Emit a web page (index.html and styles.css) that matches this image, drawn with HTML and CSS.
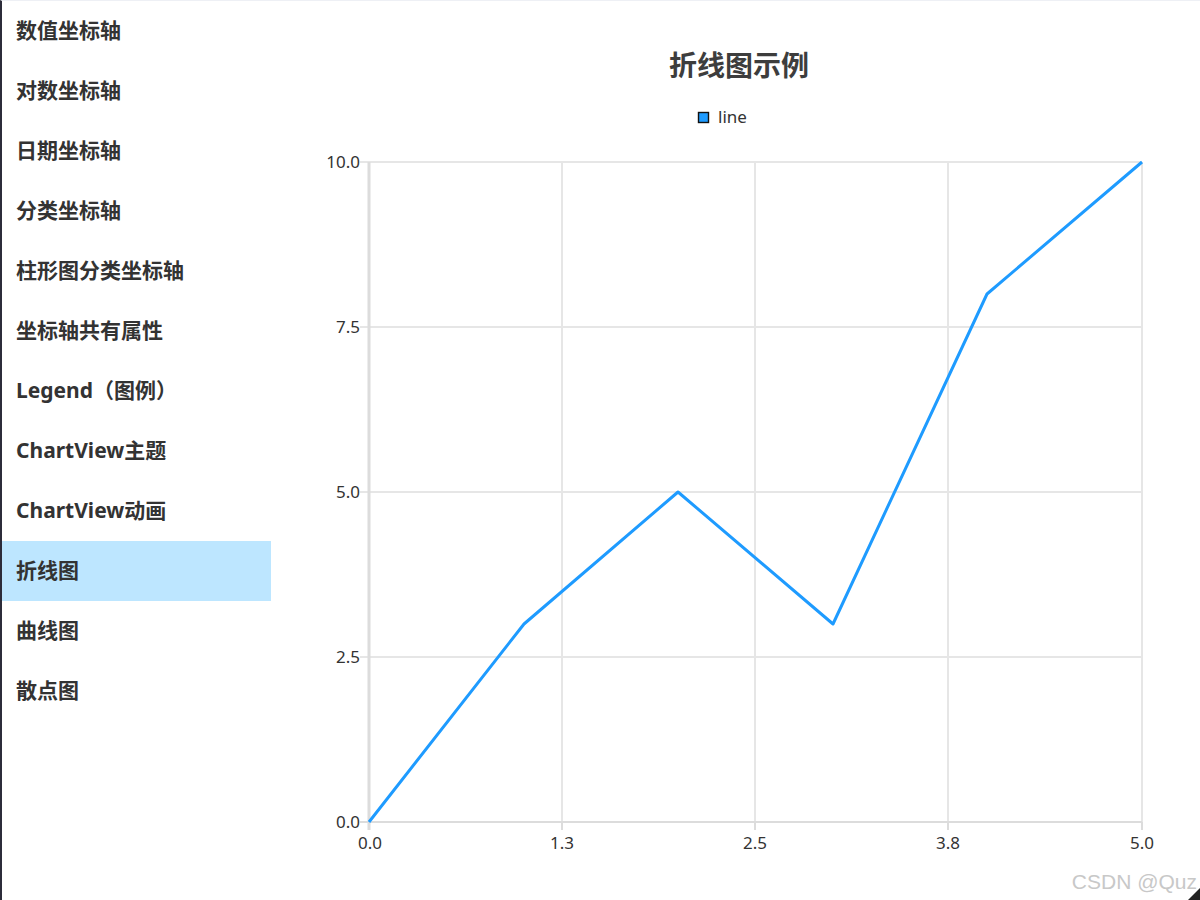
FILE: index.html
```html
<!DOCTYPE html>
<html lang="zh">
<head>
<meta charset="utf-8">
<link rel="stylesheet" href="styles.css">
</head>
<body>
<div class="window">
  <nav class="sidebar">
    <div class="item">数值坐标轴</div>
    <div class="item">对数坐标轴</div>
    <div class="item">日期坐标轴</div>
    <div class="item">分类坐标轴</div>
    <div class="item">柱形图分类坐标轴</div>
    <div class="item">坐标轴共有属性</div>
    <div class="item">Legend（图例）</div>
    <div class="item">ChartView主题</div>
    <div class="item">ChartView动画</div>
    <div class="item active">折线图</div>
    <div class="item">曲线图</div>
    <div class="item">散点图</div>
  </nav>
  <main class="chart">
    <svg class="chart-svg" width="929" height="899" viewBox="271 1 929 899" xmlns="http://www.w3.org/2000/svg">
      <text class="title" x="739" y="76" text-anchor="middle">折线图示例</text>
      <rect x="698.5" y="112.5" width="10" height="10" fill="#1e9bff" stroke="#111" stroke-width="1.4"/>
      <text class="legend" x="718" y="123">line</text>
      <g stroke="#e6e6e6" stroke-width="2">
        <line x1="562" y1="162" x2="562" y2="822"/>
        <line x1="755" y1="162" x2="755" y2="822"/>
        <line x1="948" y1="162" x2="948" y2="822"/>
        <line x1="1142" y1="162" x2="1142" y2="822"/>
        <line x1="360" y1="162" x2="1142" y2="162"/>
        <line x1="360" y1="327" x2="1142" y2="327"/>
        <line x1="360" y1="492" x2="1142" y2="492"/>
        <line x1="360" y1="657" x2="1142" y2="657"/>
      </g>
      <line x1="369" y1="162" x2="369" y2="830" stroke="#dcdcdc" stroke-width="3"/>
      <line x1="360" y1="822" x2="1142" y2="822" stroke="#dcdcdc" stroke-width="2"/>
      <line x1="562" y1="822" x2="562" y2="830" stroke="#dcdcdc" stroke-width="2"/>
      <line x1="755" y1="822" x2="755" y2="830" stroke="#dcdcdc" stroke-width="2"/>
      <line x1="948" y1="822" x2="948" y2="830" stroke="#dcdcdc" stroke-width="2"/>
      <line x1="1142" y1="822" x2="1142" y2="830" stroke="#dcdcdc" stroke-width="2"/>
      <g class="axis" text-anchor="end">
        <text x="360" y="168">10.0</text>
        <text x="360" y="333">7.5</text>
        <text x="360" y="498">5.0</text>
        <text x="360" y="663">2.5</text>
        <text x="360" y="828">0.0</text>
      </g>
      <g class="axis" text-anchor="middle">
        <text x="370" y="849">0.0</text>
        <text x="562" y="849">1.3</text>
        <text x="755" y="849">2.5</text>
        <text x="948" y="849">3.8</text>
        <text x="1142" y="849">5.0</text>
      </g>
      <polyline points="369,822 524,624 678,492 833,624 987,294 1142,162" fill="none" stroke="#1e9bff" stroke-width="3" stroke-linejoin="round"/>
      <text class="mark" x="1197" y="889" text-anchor="end">CSDN @Quz</text>
      <polygon points="1200,888 1200,900 1188,900" fill="#222"/>
    </svg>
  </main>
</div>
</body>
</html>
```
FILE: styles.css
```css
html, body {
  margin: 0;
  padding: 0;
  background: #ffffff;
}
.window {
  width: 1198px;
  height: 899px;
  border-left: 2px solid #2c2c3a;
  border-top: 1px solid #eef0f5;
  display: flex;
  background: #ffffff;
  overflow: hidden;
}
.sidebar {
  width: 269px;
  flex: none;
  display: flex;
  flex-direction: column;
}
.item {
  height: 60px;
  box-sizing: border-box;
  padding-bottom: 4px;
  display: flex;
  align-items: center;
  padding-left: 14px;
  font-family: "Noto Sans", "Noto Sans CJK SC", sans-serif;
  font-weight: 700;
  font-size: 21px;
  color: #333333;
}
.item.active {
  background: #bde6ff;
}
.chart {
  flex: 1;
  min-width: 0;
}
.chart-svg {
  display: block;
}
.title {
  font-family: "Noto Sans CJK SC", sans-serif;
  font-weight: 700;
  font-size: 28px;
  fill: #3d3d3d;
}
.legend {
  font-family: "Noto Sans", "Open Sans", sans-serif;
  font-size: 17px;
  fill: #333333;
}
.axis text {
  font-family: "Noto Sans", "Open Sans", sans-serif;
  font-size: 17px;
  fill: #333333;
}
.mark {
  font-family: "Liberation Sans", Arial, sans-serif;
  font-size: 21px;
  fill: #c8c8c8;
}
```
